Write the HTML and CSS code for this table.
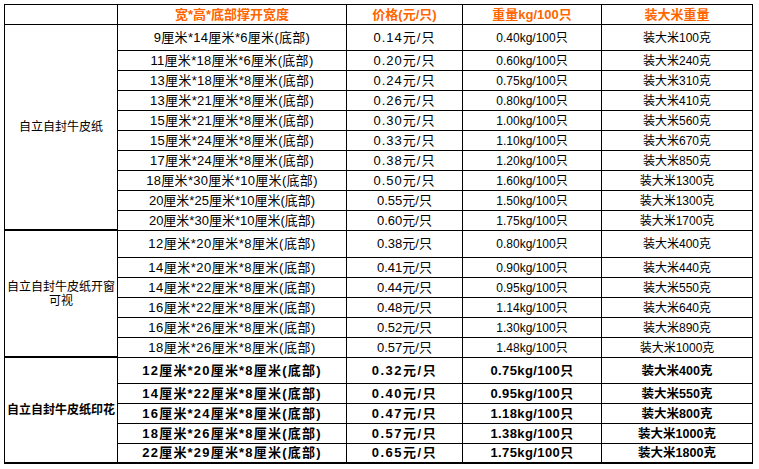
FILE: index.html
```html
<!DOCTYPE html>
<html lang="zh-CN">
<head>
<meta charset="utf-8">
<title>自立自封牛皮纸袋价格表</title>
<link rel="stylesheet" href="styles.css">
</head>
<body>
<table class="price-table">
  <colgroup>
    <col class="c-name"><col class="c-size"><col class="c-price"><col class="c-wt"><col class="c-rice">
  </colgroup>
  <thead>
    <tr class="hd">
      <th></th>
      <th>宽*高*底部撑开宽度</th>
      <th>价格(元/只)</th>
      <th>重量kg/100只</th>
      <th>装大米重量</th>
    </tr>
  </thead>
  <tbody class="g1">
    <tr class="first">
      <td class="name" rowspan="10">自立自封牛皮纸</td>
      <td class="size">9厘米*14厘米*6厘米(底部)</td><td class="price">0.14元/只</td><td class="wt">0.40kg/100只</td><td class="rice">装大米100克</td>
    </tr>
    <tr><td class="size">11厘米*18厘米*6厘米(底部)</td><td class="price">0.20元/只</td><td class="wt">0.60kg/100只</td><td class="rice">装大米240克</td></tr>
    <tr><td class="size">13厘米*18厘米*8厘米(底部)</td><td class="price">0.24元/只</td><td class="wt">0.75kg/100只</td><td class="rice">装大米310克</td></tr>
    <tr><td class="size">13厘米*21厘米*8厘米(底部)</td><td class="price">0.26元/只</td><td class="wt">0.80kg/100只</td><td class="rice">装大米410克</td></tr>
    <tr><td class="size">15厘米*21厘米*8厘米(底部)</td><td class="price">0.30元/只</td><td class="wt">1.00kg/100只</td><td class="rice">装大米560克</td></tr>
    <tr><td class="size">15厘米*24厘米*8厘米(底部)</td><td class="price">0.33元/只</td><td class="wt">1.10kg/100只</td><td class="rice">装大米670克</td></tr>
    <tr><td class="size">17厘米*24厘米*8厘米(底部)</td><td class="price">0.38元/只</td><td class="wt">1.20kg/100只</td><td class="rice">装大米850克</td></tr>
    <tr><td class="size">18厘米*30厘米*10厘米(底部)</td><td class="price">0.50元/只</td><td class="wt">1.60kg/100只</td><td class="rice">装大米1300克</td></tr>
    <tr class="alt"><td class="size">20厘米*25厘米*10厘米(底部)</td><td class="price">0.55元/只</td><td class="wt">1.50kg/100只</td><td class="rice">装大米1300克</td></tr>
    <tr class="alt"><td class="size">20厘米*30厘米*10厘米(底部)</td><td class="price">0.60元/只</td><td class="wt">1.75kg/100只</td><td class="rice">装大米1700克</td></tr>
  </tbody>
  <tbody class="g2">
    <tr class="first">
      <td class="name" rowspan="6">自立自封牛皮纸开窗可视</td>
      <td class="size">12厘米*20厘米*8厘米(底部)</td><td class="price">0.38元/只</td><td class="wt">0.80kg/100只</td><td class="rice">装大米400克</td>
    </tr>
    <tr><td class="size">14厘米*20厘米*8厘米(底部)</td><td class="price">0.41元/只</td><td class="wt">0.90kg/100只</td><td class="rice">装大米440克</td></tr>
    <tr><td class="size">14厘米*22厘米*8厘米(底部)</td><td class="price">0.44元/只</td><td class="wt">0.95kg/100只</td><td class="rice">装大米550克</td></tr>
    <tr><td class="size">16厘米*22厘米*8厘米(底部)</td><td class="price">0.48元/只</td><td class="wt">1.14kg/100只</td><td class="rice">装大米640克</td></tr>
    <tr><td class="size">16厘米*26厘米*8厘米(底部)</td><td class="price">0.52元/只</td><td class="wt">1.30kg/100只</td><td class="rice">装大米890克</td></tr>
    <tr><td class="size">18厘米*26厘米*8厘米(底部)</td><td class="price">0.57元/只</td><td class="wt">1.48kg/100只</td><td class="rice">装大米1000克</td></tr>
  </tbody>
  <tbody class="g3">
    <tr class="first">
      <td class="name" rowspan="5">自立自封牛皮纸印花</td>
      <td class="size">12厘米*20厘米*8厘米(底部)</td><td class="price">0.32元/只</td><td class="wt">0.75kg/100只</td><td class="rice">装大米400克</td>
    </tr>
    <tr><td class="size">14厘米*22厘米*8厘米(底部)</td><td class="price">0.40元/只</td><td class="wt">0.95kg/100只</td><td class="rice">装大米550克</td></tr>
    <tr><td class="size">16厘米*24厘米*8厘米(底部)</td><td class="price">0.47元/只</td><td class="wt">1.18kg/100只</td><td class="rice">装大米800克</td></tr>
    <tr><td class="size">18厘米*26厘米*8厘米(底部)</td><td class="price">0.57元/只</td><td class="wt">1.38kg/100只</td><td class="rice">装大米1000克</td></tr>
    <tr class="last"><td class="size">22厘米*29厘米*8厘米(底部)</td><td class="price">0.65元/只</td><td class="wt">1.75kg/100只</td><td class="rice">装大米1800克</td></tr>
  </tbody>
</table>
</body>
</html>
```

FILE: styles.css
```css
html, body {
  margin: 0;
  padding: 0;
  background: #fff;
}

body {
  font-family: "Liberation Sans", "Noto Sans CJK SC", sans-serif;
  color: #000;
}

.price-table {
  margin: 4px 0 0 4px;
  border-collapse: separate;
  border-spacing: 0;
  border-top: 1px solid #000;
  border-left: 1px solid #000;
  table-layout: fixed;
  width: 749px;
}

.c-name { width: 113px; }
.c-size { width: 229px; }
.c-price { width: 116px; }
.c-wt { width: 139px; }
.c-rice { width: 151px; }

.price-table th,
.price-table td {
  box-sizing: border-box;
  padding: 0;
  border-right: 1px solid #000;
  border-bottom: 1px solid #000;
  text-align: center;
  vertical-align: middle;
  line-height: 14px;
  white-space: nowrap;
  font-size: 12px;
  font-weight: normal;
}

.price-table tr { height: 20px; }

.hd th {
  color: #ff6600;
  font-weight: bold;
  font-size: 13px;
}

.g1 .first { height: 26px; }
.g2 .first { height: 27px; }
.g3 .first { height: 26px; }

.price-table td.name {
  white-space: normal;
  font-size: 12px;
  line-height: 14px;
  border-bottom-width: 2px;
}

/* group 1 */
.g1 .size { font-size: 13px; letter-spacing: 0.3px; }
.g1 .price { font-size: 13px; letter-spacing: 1px; }
.g1 .alt .size { letter-spacing: 0; }
.g1 .alt .price { letter-spacing: 0; }

/* group 2 */
.g2 .size { font-size: 13px; letter-spacing: 0.5px; }
.g2 .price { font-size: 13px; }

/* group 3 */
.g3 td { font-weight: bold; }
.price-table .g3 td { font-weight: bold; }
.g3 .size { font-size: 13px; letter-spacing: 1.2px; }
.g3 .price { font-size: 13px; letter-spacing: 1.5px; }
.g3 .wt { font-size: 13px; letter-spacing: 0.4px; }
.g3 .rice { font-size: 12.5px; }
.g3 .last td { border-bottom-width: 2px; }
.g3 .last { height: 20px; }
```
